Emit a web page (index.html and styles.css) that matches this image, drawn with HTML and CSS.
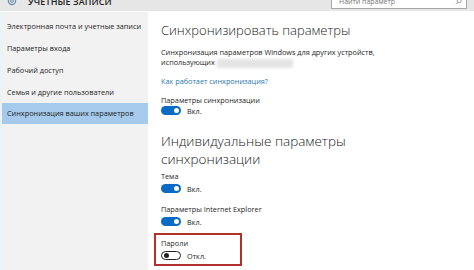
FILE: index.html
```html
<!DOCTYPE html>
<html lang="ru">
<head>
<meta charset="utf-8">
<link rel="stylesheet" href="styles.css">
</head>
<body>
<div class="window">
  <div class="header">
    <div class="header-row">
      <svg class="gear" width="10" height="10" viewBox="0 0 10 10"><circle cx="5" cy="5" r="3.6" fill="none" stroke="#6a8db0" stroke-width="1.2"/><circle cx="5" cy="5" r="1.4" fill="none" stroke="#6a8db0" stroke-width="1"/></svg>
      <span class="header-title">УЧЕТНЫЕ ЗАПИСИ</span>
      <div class="search"><span class="search-text">Найти параметр</span><svg width="7" height="7" viewBox="0 0 7 7"><circle cx="4.2" cy="2.8" r="2" fill="none" stroke="#888" stroke-width="0.8"/><line x1="2.8" y1="4.2" x2="0.8" y2="6.2" stroke="#888" stroke-width="0.8"/></svg></div>
    </div>
  </div>
  <div class="main">
    <nav class="sidebar">
      <div class="nav-item">Электронная почта и учетные записи</div>
      <div class="nav-item">Параметры входа</div>
      <div class="nav-item">Рабочий доступ</div>
      <div class="nav-item">Семья и другие пользователи</div>
      <div class="nav-item active">Синхронизация ваших параметров</div>
    </nav>
    <section class="content">
      <h1 class="title">Синхронизировать параметры</h1>
      <p class="desc">Синхронизация параметров Windows для других устройств,<br>использующих <span class="blur"></span></p>
      <a class="link">Как работает синхронизация?</a>
      <div class="setting first">
        <div class="label">Параметры синхронизации</div>
        <div class="toggle-row"><span class="toggle on"></span><span class="state">Вкл.</span></div>
      </div>
      <h2 class="title sub">Индивидуальные параметры<br>синхронизации</h2>
      <div class="setting theme">
        <div class="label">Тема</div>
        <div class="toggle-row"><span class="toggle on"></span><span class="state">Вкл.</span></div>
      </div>
      <div class="setting">
        <div class="label">Параметры Internet Explorer</div>
        <div class="toggle-row"><span class="toggle on"></span><span class="state">Вкл.</span></div>
      </div>
      <div class="setting boxed">
        <div class="label">Пароли</div>
        <div class="toggle-row"><span class="toggle off"></span><span class="state">Откл.</span></div>
      </div>
    </section>
  </div>
</div>
</body>
</html>
```
FILE: styles.css
```css
html, body {
  margin: 0;
  padding: 0;
  background: #ffffff;
  overflow: hidden;
}
body {
  font-family: "Open Sans", "Noto Sans", sans-serif;
  color: #1f1f1f;
}
.window {
  width: 474px;
  height: 270px;
  overflow: hidden;
  display: flex;
  flex-direction: column;
}
.header {
  height: 11px;
  background: #e6e6e6;
  overflow: hidden;
  flex: none;
}
.header-row {
  height: 18px;
  margin-top: -8px;
  display: flex;
  align-items: center;
  padding-left: 7px;
  padding-right: 7px;
}
.gear { flex: none; }
.header-title {
  margin-left: 11px;
  font-size: 9px;
  font-weight: 600;
  letter-spacing: 0.1px;
  color: #222;
}
.search {
  margin-left: auto;
  width: 136px;
  height: 15px;
  margin-top: 1px;
  box-sizing: border-box;
  border: 1px solid #a9a9a9;
  background: #fff;
  display: flex;
  align-items: center;
  justify-content: space-between;
  padding: 0 4px 0 7px;
}
.search-text {
  font-size: 7px;
  color: #777;
}
.main {
  flex: 1;
  display: flex;
  padding-top: 1px;
}
.sidebar {
  width: 146px;
  background: #f2f2f2;
  border-left: 2px solid #eaf4f6;
  padding-top: 3px;
  flex: none;
}
.nav-item {
  height: 22px;
  line-height: 22px;
  font-size: 7.3px;
  padding-left: 5px;
  color: #222;
  white-space: nowrap;
}
.nav-item.active {
  background: #a5caec;
  height: 21px;
  line-height: 21px;
}
.content {
  padding-left: 13px;
  padding-top: 10px;
  flex: 1;
}
.title {
  margin: 0;
  font-size: 13px;
  line-height: 16px;
  font-weight: 300;
  color: #1a1a1a;
  white-space: nowrap;
}
.title.sub {
  font-size: 13.5px;
  line-height: 18px;
  margin-top: 16px;
}
.desc {
  margin: 9px 0 0;
  font-size: 7.3px;
  line-height: 10px;
  white-space: nowrap;
}
.blur {
  display: inline-block;
  width: 76px;
  height: 9px;
  vertical-align: middle;
  background: #e4e4e4;
  filter: blur(1.5px);
}
.link {
  display: block;
  margin-top: 8px;
  font-size: 7.3px;
  line-height: 10px;
  color: #2a78b0;
}
.setting {
  margin-top: 10px;
}
.setting.first {
  margin-top: 9px;
}
.setting.theme {
  margin-top: 3px;
}
.label {
  font-size: 7.3px;
  line-height: 10px;
}
.toggle-row {
  display: flex;
  align-items: center;
  margin-top: 3px;
  height: 10px;
}
.setting.first .toggle-row {
  margin-top: 1px;
}
.toggle {
  box-sizing: border-box;
  width: 20px;
  height: 9px;
  border-radius: 5px;
  position: relative;
  flex: none;
}
.toggle.on {
  background: #0b6bc4;
}
.toggle.on::after {
  content: "";
  position: absolute;
  right: 2px;
  top: 2px;
  width: 5px;
  height: 5px;
  border-radius: 50%;
  background: #fff;
}
.toggle.off {
  border: 1px solid #222;
  background: #fff;
}
.toggle.off::after {
  content: "";
  position: absolute;
  left: 1.5px;
  top: 1px;
  width: 5px;
  height: 5px;
  border-radius: 50%;
  background: #222;
}
.state {
  margin-left: 6px;
  font-size: 7.3px;
  color: #222;
}
.setting.boxed {
  margin-top: 6px;
  margin-left: -7px;
  width: 88px;
  box-sizing: border-box;
  border: 2px solid #b4302e;
  padding: 3px 0 3px 5px;
}
```
